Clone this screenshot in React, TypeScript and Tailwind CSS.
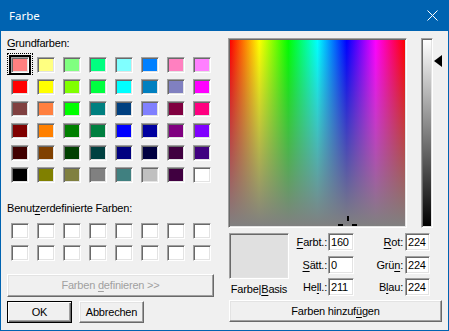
import React from 'react';

const basicColors = [
  '#ff8080', '#ffff80', '#80ff80', '#00ff80', '#80ffff', '#0080ff', '#ff80c0', '#ff80ff',
  '#ff0000', '#ffff00', '#80ff00', '#00ff40', '#00ffff', '#0080c0', '#8080c0', '#ff00ff',
  '#804040', '#ff8040', '#00ff00', '#008080', '#004080', '#8080ff', '#800040', '#ff0080',
  '#800000', '#ff8000', '#008000', '#008040', '#0000ff', '#0000a0', '#800080', '#8000ff',
  '#400000', '#804000', '#004000', '#004040', '#000080', '#000040', '#400040', '#400080',
  '#000000', '#808000', '#808040', '#808080', '#408080', '#c0c0c0', '#400040', '#ffffff',
];

const sunken =
  'border border-t-[#a0a0a0] border-l-[#a0a0a0] border-r-white border-b-white shadow-[inset_1px_1px_0_#696969,inset_-1px_-1px_0_#e3e3e3]';

const U: React.FC<{ children: React.ReactNode }> = ({ children }) => (
  <span className="underline underline-offset-[2px] decoration-[1px]">{children}</span>
);

const Swatch: React.FC<{ color: string; selected?: boolean }> = ({ color, selected }) => (
  <div className="relative w-[26px] h-[22px] flex items-center justify-center">
    {selected && (
      <>
        <div className="absolute left-0 top-[-1px] w-[26px] h-[22px] border border-dotted border-black" />
        <div className="absolute left-[2px] top-[1px] w-[22px] h-[20px] border-2 border-black" />
      </>
    )}
    <div className={`w-[18px] h-[16px] p-[1px] ${sunken}`}>
      <div className="w-full h-full" style={{ backgroundColor: color }} />
    </div>
  </div>
);

const Button: React.FC<{
  children: React.ReactNode;
  isDefault?: boolean;
  disabled?: boolean;
  className?: string;
}> = ({ children, isDefault, disabled, className = '' }) => (
  <div
    className={`flex items-center justify-center bg-[#f0f0f0] border ${
      isDefault
        ? 'border-black shadow-[inset_1px_1px_0_#fff,inset_-1px_-1px_0_#696969,inset_-2px_-2px_0_#a0a0a0]'
        : 'border-t-white border-l-white border-r-[#696969] border-b-[#696969] shadow-[inset_-1px_-1px_0_#a0a0a0,inset_1px_1px_0_#e3e3e3]'
    } ${disabled ? 'text-[#a0a0a0]' : 'text-black'} ${className}`}
  >
    <span className="whitespace-pre">{children}</span>
  </div>
);

const Field: React.FC<{ value: string; className?: string }> = ({ value, className = '' }) => (
  <div className={`h-[18px] bg-white pl-[2px] flex items-center leading-none ${sunken} ${className}`}>
    {value}
  </div>
);

export default function App() {
  return (
    <div className="w-[449px] h-[331px] flex flex-col bg-[#f0f0f0] border border-t-0 border-[#0063b1] font-['Liberation_Sans',Arial,sans-serif] text-[11px] tracking-[-0.2px] text-black select-none">
      {/* Title bar */}
      <div className="h-[31px] shrink-0 -mx-[1px] bg-[#0063b1] flex items-center justify-between pl-[9px] pr-[11px]">
        <span className="font-['Noto_Sans',sans-serif] text-[11.5px] tracking-normal text-white">Farbe</span>
        <svg width="11" height="11" viewBox="0 0 11 11" className="mt-[-1px]">
          <path d="M0.5 0.5 L10.5 10.5 M10.5 0.5 L0.5 10.5" stroke="white" strokeWidth="1" />
        </svg>
      </div>

      <div className="flex flex-1">
        {/* Left column */}
        <div className="w-[227px] pl-[6px] flex flex-col">
          <div className="mt-[6px] leading-[13px]">
            <U>G</U>rundfarben:
          </div>
          <div className="mt-[4px] grid grid-cols-[repeat(8,26px)]">
            {basicColors.map((c, i) => (
              <Swatch key={i} color={c} selected={i === 0} />
            ))}
          </div>
          <div className="mt-[16px] leading-[13px]">
            Benut<U>z</U>erdefinierte Farben:
          </div>
          <div className="mt-[5px] grid grid-cols-[repeat(8,26px)]">
            {Array.from({ length: 16 }).map((_, i) => (
              <Swatch key={i} color="#ffffff" />
            ))}
          </div>
          <Button disabled className="mt-[10px] w-[207px] h-[23px]">
            Farben <U>d</U>efinieren &gt;&gt;
          </Button>
          <div className="mt-[4px] flex gap-[7px]">
            <Button isDefault className="w-[65px] h-[22px]">
              OK
            </Button>
            <Button className="w-[65px] h-[22px]">Abbrechen</Button>
          </div>
        </div>

        {/* Right column */}
        <div className="flex flex-col pt-[7px]">
          <div className="flex">
            <div className={`relative w-[179px] h-[190px] p-[1px] ${sunken}`}>
              <div className="relative w-full h-full overflow-hidden bg-[linear-gradient(to_right,#ff0000,#ffff00_16.7%,#00ff00_33.3%,#00ffff_50%,#0000ff_66.7%,#ff00ff_83.3%,#ff0000)]">
                <div className="absolute inset-0 bg-[linear-gradient(to_bottom,rgba(128,128,128,0),#808080)]" />
                {/* crosshair */}
                <div className="absolute left-[117px] top-[176px] w-[2px] h-[5px] bg-black" />
                <div className="absolute left-[108px] top-[184px] w-[5px] h-[3px] bg-black" />
                <div className="absolute left-[122px] top-[184px] w-[5px] h-[3px] bg-black" />
              </div>
            </div>
            <div className={`ml-[14px] w-[12px] h-[190px] p-[1px] ${sunken}`}>
              <div className="w-full h-full bg-[linear-gradient(to_bottom,#ffffff,#000000)]" />
            </div>
            <svg width="8" height="12" viewBox="0 0 8 12" className="ml-[1px] mt-[17px]">
              <path d="M0 6 L8 0 L8 12 Z" fill="black" />
            </svg>
          </div>

          <div className="flex mt-[5px] ml-[1px]">
            <div className="w-[60px] flex flex-col items-center">
              <div className={`w-[60px] h-[46px] p-[1px] ${sunken}`}>
                <div className="w-full h-full bg-[#e0e0e0]" />
              </div>
              <div className="mt-[4px] leading-[13px] whitespace-nowrap">
                Farbe|<U>B</U>asis
              </div>
            </div>

            <div className="flex flex-col">
              {[
                ['Farbt.:', 'F', '160', 'Rot:', 'R', '224'],
                ['Sätt.:', 'S', '0', 'Grün:', 'n', '224'],
                ['Hell.:', 'l', '211', 'Blau:', 'l', '224'],
              ].map(([l1, k1, v1, l2, k2, v2], i) => {
                const mark = (label: string, key: string) => {
                  const idx = label.indexOf(key);
                  return (
                    <>
                      {label.slice(0, idx)}
                      <U>{key}</U>
                      {label.slice(idx + 1)}
                    </>
                  );
                };
                return (
                  <div key={i} className={`flex items-center h-[18px] ${i === 0 ? '' : i === 1 ? 'mt-[5px]' : 'mt-[4px]'}`}>
                    <div className="w-[39px] text-right pr-[1px]">{mark(l1, k1)}</div>
                    <Field value={v1} className="w-[26px]" />
                    <div className="w-[51px] text-right pr-[2px]">{mark(l2, k2)}</div>
                    <Field value={v2} className="w-[25px]" />
                  </div>
                );
              })}
            </div>
          </div>

          <Button className="mt-[4px] ml-[1px] w-[213px] h-[22px]">
            Farben hinzuf<U>ü</U>gen
          </Button>
        </div>
      </div>
    </div>
  );
}
